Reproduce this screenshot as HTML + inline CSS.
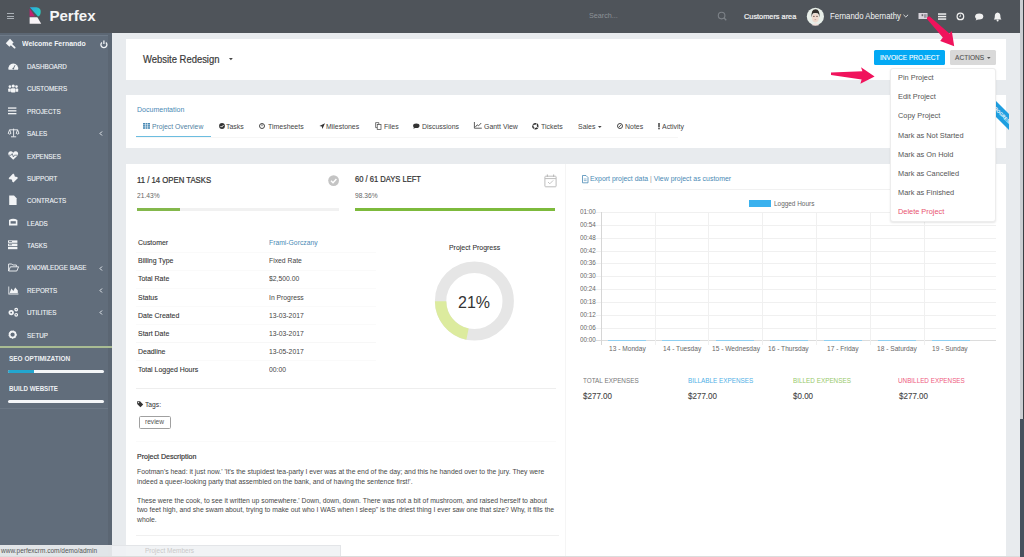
<!DOCTYPE html>
<html><head><meta charset="utf-8">
<style>
*{box-sizing:border-box;margin:0;padding:0}
html,body{width:1024px;height:557px;overflow:hidden}
body{position:relative;background:#e8ebee;font-family:"Liberation Sans",sans-serif;color:#333}
.a{position:absolute}
.t{position:absolute;white-space:nowrap;line-height:10px;height:10px;transform:scaleX(0.92);transform-origin:0 0}
svg{position:absolute;overflow:visible}
#hdr{left:0;top:0;width:1020px;height:33px;background:#4f545a}
#side{left:0;top:33px;width:112px;height:524px;background:#616d7b}
#sideb{left:108px;top:33px;width:4px;height:524px;background:#5b6673}
.panel{position:absolute;background:#fff;left:126px;width:880px}
.mi{color:#f0f3f6;font-size:6.85px;left:26.9px;-webkit-text-stroke:0.12px #f0f3f6}
.tab{color:#444;font-size:7.55px}
.lbl{font-size:7.55px;color:#333;left:137.5px;-webkit-text-stroke:0.1px #333}
.val{font-size:7.39px;color:#444;left:268.8px}
.dd{font-size:8.03px;color:#555;left:898.2px}
.yl{font-size:6.85px;color:#666;left:579.8px}
.xl{font-size:7.20px;color:#666}
.gh{position:absolute;left:596px;width:400px;height:1px;background:#f0f0f0}
.gv{position:absolute;top:212px;width:1px;height:133px;background:#f0f0f0}
.desc{font-size:7.42px;color:#474747;left:136.8px}
</style></head><body>
<!-- header -->
<div id="hdr" class="a"></div>
<div class="a" style="left:1020px;top:0;width:4px;height:557px;background:#cbced2"></div>
<div class="a" style="left:1023px;top:0;width:1px;height:419px;background:#3a3f44"></div>
<div class="a" style="left:1020px;top:419px;width:4px;height:138px;background:#46515d"></div>
<!-- hamburger -->
<div class="a" style="left:7px;top:13px;width:7px;height:1.3px;background:#aab0b6"></div>
<div class="a" style="left:7px;top:15.6px;width:7px;height:1.3px;background:#aab0b6"></div>
<div class="a" style="left:7px;top:18.2px;width:7px;height:1.3px;background:#aab0b6"></div>
<!-- logo -->
<svg style="left:0;top:0" width="60" height="32">
 <defs><linearGradient id="lg1" x1="0" y1="0" x2="1" y2="0.3"><stop offset="0" stop-color="#27a9e8"/><stop offset="1" stop-color="#2ec9c0"/></linearGradient></defs>
 <path d="M29.8 7.2 L36.4 7.3 Q40.9 7.8 40.7 12 Q40.5 15.8 38 16.6 Z" fill="url(#lg1)"/>
 <path d="M29.6 8.6 L35 16.6 L29.6 16.6 Z" fill="#c2206f"/>
 <path d="M29.6 17.2 L37.4 17.2 L41.2 23.8 L29.6 23.8 Z" fill="#f7f3f6"/>
</svg>
<div class="t" style="left:49.4px;top:10px;font-size:15.1px;line-height:12px;height:12px;font-weight:700;color:#f4f5f6;transform:none">Perfex</div>
<!-- search -->
<div class="t" style="left:589px;top:11px;font-size:7.83px;color:#8d9297">Search...</div>
<svg style="left:717px;top:11px" width="12" height="12"><circle cx="4.6" cy="4.6" r="3.3" fill="none" stroke="#7d8288" stroke-width="1.1"/><path d="M7 7 L9.3 9.3" stroke="#7d8288" stroke-width="1.3"/></svg>
<div class="t" style="left:743.9px;top:12.1px;font-size:7.99px;color:#f2f3f4;-webkit-text-stroke:0.22px #f2f3f4">Customers area</div>
<svg style="left:806px;top:7px" width="19" height="19">
 <circle cx="9.4" cy="9.4" r="8.6" fill="#e8efe9"/>
 <path d="M5.5 18 Q9.4 14.5 13.3 18 Q9.4 19.6 5.5 18Z" fill="#f3e2dc"/>
 <ellipse cx="9.4" cy="10.8" rx="3.4" ry="4.6" fill="#efd9cd"/>
 <path d="M5.6 10.4 Q4.8 2.2 9.6 2.2 Q14.2 2.4 13.4 10.4 L12.8 7.4 Q12 5.8 9.4 6 Q6.8 5.8 6.2 7.4 Z" fill="#34302c"/>
 <circle cx="7.9" cy="9.4" r="0.6" fill="#4a3a34"/><circle cx="11" cy="9.4" r="0.6" fill="#4a3a34"/>
 <path d="M8.6 12.6 H10.2" stroke="#b08a80" stroke-width="0.6"/>
</svg>
<div class="t" style="left:829.6px;top:11.3px;font-size:8.53px;color:#f2f3f4">Fernando Abernathy</div>
<svg style="left:903px;top:14px" width="6" height="4"><path d="M0.5 0.8 L2.8 3 L5.1 0.8" fill="none" stroke="#e6e8ea" stroke-width="0.9"/></svg>
<!-- header icons -->
<svg style="left:918px;top:12px" width="10" height="8"><rect x="0.5" y="1" width="9" height="6" fill="#d9d5dc"/><rect x="3.6" y="2.2" width="1.6" height="2" fill="#6b6870"/><rect x="6" y="2.2" width="2.6" height="3.6" fill="#9a96a0"/></svg>
<svg style="left:938px;top:12.5px" width="9" height="8"><rect x="0" y="0.3" width="8.2" height="1.5" fill="#f0f0f0"/><rect x="0" y="2.8" width="8.2" height="1.5" fill="#f0f0f0"/><rect x="0" y="5.3" width="8.2" height="1.5" fill="#f0f0f0"/></svg>
<svg style="left:956px;top:12px" width="9" height="9"><circle cx="4.4" cy="4.4" r="3.3" fill="none" stroke="#f0f0f0" stroke-width="1.2"/><path d="M4.4 2.5 V4.6 H3.2" fill="none" stroke="#f0f0f0" stroke-width="0.8"/></svg>
<svg style="left:975px;top:12.5px" width="9" height="9"><ellipse cx="4.2" cy="3.4" rx="4.1" ry="3" fill="#f0f0f0"/><path d="M1.6 5.6 L0.6 7.6 L4 6" fill="#f0f0f0"/></svg>
<svg style="left:994px;top:11.5px" width="8" height="10"><path d="M3.6 0.6 Q6.6 1.2 6.4 4.6 Q6.4 6.6 7.4 7.6 H-0.2 Q0.8 6.6 0.8 4.6 Q0.6 1.2 3.6 0.6Z" fill="#f0f0f0"/><circle cx="3.6" cy="8.4" r="1" fill="#f0f0f0"/></svg>

<!-- sidebar -->
<div id="side" class="a"></div>
<div id="sideb" class="a"></div>
<div class="a" style="left:0;top:33px;width:112px;height:2px;background:#5c6774"></div><div class="a" style="left:0;top:35.2px;width:108px;height:0.8px;background:#6e7a88"></div>
<!-- welcome -->
<svg style="left:0;top:34px" width="20" height="16"><path d="M5.8 9.2 L10 4.8 L13.6 8.4 L9.4 12.8Z" fill="#f2f4f6"/><path d="M11.2 10.4 L14.6 13.6" stroke="#f2f4f6" stroke-width="1.9" stroke-linecap="round"/></svg>
<div class="t" style="left:21.7px;top:39px;font-size:7.53px;font-weight:700;color:#f2f4f6">Welcome Fernando</div>
<svg style="left:99.6px;top:39.6px" width="8" height="9"><path d="M1.9 2.4 A3 3 0 1 0 5.9 2.4" fill="none" stroke="#f2f4f6" stroke-width="1.3"/><path d="M3.9 0.4 V4" stroke="#f2f4f6" stroke-width="1.3"/></svg>
<!-- menu -->
<div class="t mi" style="top:61.50px">DASHBOARD</div>
<div class="t mi" style="top:84.24px">CUSTOMERS</div>
<div class="t mi" style="top:107.28px">PROJECTS</div>
<div class="t mi" style="top:128.66px">SALES</div>
<div class="t mi" style="top:151.65px">EXPENSES</div>
<div class="t mi" style="top:174.44px">SUPPORT</div>
<div class="t mi" style="top:195.83px">CONTRACTS</div>
<div class="t mi" style="top:218.82px">LEADS</div>
<div class="t mi" style="top:240.60px">TASKS</div>
<div class="t mi" style="top:262.99px">KNOWLEDGE BASE</div>
<div class="t mi" style="top:286.38px">REPORTS</div>
<div class="t mi" style="top:307.77px">UTILITIES</div>
<div class="t mi" style="top:330.86px">SETUP</div>
<!-- chevrons -->
<svg style="left:98.5px;top:131.26px" width="4" height="5"><path d="M3 0.5 L1 2.5 L3 4.5" fill="none" stroke="#e9edf1" stroke-width="1"/></svg>
<svg style="left:98.5px;top:265.59px" width="4" height="5"><path d="M3 0.5 L1 2.5 L3 4.5" fill="none" stroke="#e9edf1" stroke-width="1"/></svg>
<svg style="left:98.5px;top:287.98px" width="4" height="5"><path d="M3 0.5 L1 2.5 L3 4.5" fill="none" stroke="#e9edf1" stroke-width="1"/></svg>
<svg style="left:98.5px;top:310.37px" width="4" height="5"><path d="M3 0.5 L1 2.5 L3 4.5" fill="none" stroke="#e9edf1" stroke-width="1"/></svg>
<!-- menu icons -->
<svg style="left:7.5px;top:62px" width="11" height="9" fill="#f2f4f6">
 <path d="M0.6 7.8 A4.9 4.9 0 1 1 10 7.8 Z"/><path d="M5.3 6.8 L7 3.2" stroke="#616d7b" stroke-width="0.9"/><circle cx="5.3" cy="6.6" r="0.9" fill="#616d7b"/>
</svg>
<svg style="left:8px;top:83.5px" width="11" height="9" fill="#f2f4f6">
 <circle cx="5.2" cy="2" r="1.6"/><circle cx="1.9" cy="2.6" r="1.3"/><circle cx="8.5" cy="2.6" r="1.3"/><rect x="3" y="4.2" width="4.4" height="4.4" rx="0.8"/><rect x="0.2" y="4.6" width="2.6" height="3.2" rx="0.6"/><rect x="7.6" y="4.6" width="2.6" height="3.2" rx="0.6"/>
</svg>
<svg style="left:8px;top:107px" width="10" height="8" fill="#f2f4f6"><rect x="0" y="0.4" width="8.4" height="1.3"/><rect x="0" y="3.2" width="8.4" height="1.3"/><rect x="0" y="6" width="8.4" height="1.3"/></svg>
<svg style="left:7.5px;top:128px" width="12" height="10" fill="none" stroke="#f2f4f6" stroke-width="0.9">
 <path d="M5.6 0.6 V8.6 M1.6 1.8 H9.6 M3 8.8 H8.2"/><path d="M1.6 1.8 L0.2 5.4 Q1.6 6.8 3 5.4 Z M9.6 1.8 L8.2 5.4 Q9.6 6.8 11 5.4 Z"/>
</svg>
<svg style="left:7.5px;top:151px" width="11" height="9" fill="#f2f4f6"><path d="M5.2 8.8 L0.8 4.4 Q-0.6 2 1.6 0.6 Q3.6 -0.2 5.2 1.8 Q6.8 -0.2 8.8 0.6 Q11 2 9.6 4.4 Z"/><path d="M0.8 4.2 H3.2 L4.2 2.6 L5.4 6 L6.4 4.2 H9.6" fill="none" stroke="#616d7b" stroke-width="0.8"/></svg>
<svg style="left:7.5px;top:173px" width="11" height="10" fill="#f2f4f6"><path d="M0.6 5.2 L5.2 0.6 L6.6 2 Q6 3 7 3.6 Q8 4.2 8.8 3.8 L10 5 L5.4 9.6 L4 8.2 Q4.6 7.2 3.6 6.6 Q2.6 6 1.8 6.4 Z"/></svg>
<svg style="left:9px;top:195px" width="9" height="11" fill="#f2f4f6"><path d="M0.2 0.6 H5 L7.6 3.2 V10 H0.2 Z"/></svg>
<svg style="left:8px;top:218px" width="11" height="9" fill="#f2f4f6"><path d="M1 2 Q5.2 -0.4 9.4 2 V7.6 H1 Z"/><rect x="2.6" y="3.2" width="5.2" height="2.4" fill="#616d7b"/></svg>
<svg style="left:8px;top:240px" width="11" height="10" fill="#f2f4f6"><rect x="0" y="0.4" width="9.4" height="2.4"/><rect x="0" y="3.6" width="9.4" height="2.4"/><rect x="0" y="6.8" width="9.4" height="2.4"/><rect x="1" y="1.2" width="3" height="0.8" fill="#616d7b"/><rect x="1" y="4.4" width="3" height="0.8" fill="#616d7b"/></svg>
<svg style="left:7.5px;top:263px" width="12" height="9" fill="none" stroke="#f2f4f6" stroke-width="0.9"><path d="M0.6 8 V1 H3.8 L4.8 2 H8.4 V3.6 M0.6 8 L2.4 3.8 H10.6 L8.8 8 Z"/></svg>
<svg style="left:7.5px;top:285.5px" width="11" height="9" fill="#f2f4f6"><path d="M0.4 8.4 V0.4 H1.2 V7.4 H10.4 V8.4 Z"/><path d="M1.6 7 L3.4 2.6 L5.4 5 L7.2 1.6 L9.8 4.6 V7 Z"/></svg>
<svg style="left:7.5px;top:307px" width="11" height="10" fill="none" stroke="#f2f4f6"><circle cx="3.2" cy="5.6" r="1.8" stroke-width="1.8"/><circle cx="8.2" cy="2.6" r="1.3" stroke-width="1.2"/><circle cx="8.2" cy="7.8" r="1.3" stroke-width="1.2"/></svg>
<svg style="left:8px;top:330px" width="10" height="10"><circle cx="4.6" cy="4.6" r="3.2" fill="none" stroke="#f2f4f6" stroke-width="1.8" stroke-dasharray="1.3 0.8"/><circle cx="4.6" cy="4.6" r="3" fill="none" stroke="#f2f4f6" stroke-width="1.6"/></svg>
<!-- sidebar bottom -->
<div class="a" style="left:0;top:345.6px;width:112px;height:2px;background:#a9bc93"></div>
<div class="t" style="left:8.6px;top:353.6px;font-size:7.03px;font-weight:700;color:#eef1f4">SEO OPTIMIZATION</div>
<div class="a" style="left:8px;top:369.8px;width:96px;height:3px;background:#f4f6f8;border-radius:1.5px"></div>
<div class="a" style="left:8px;top:369.8px;width:26px;height:3px;background:#22a6cf;border-radius:1.5px 0 0 1.5px"></div>
<div class="t" style="left:8.6px;top:384px;font-size:6.74px;font-weight:700;color:#eef1f4">BUILD WEBSITE</div>
<div class="a" style="left:8px;top:400.2px;width:96px;height:3px;background:#f4f6f8;border-radius:1.5px"></div>
<div class="a" style="left:0;top:407.6px;width:108px;height:1px;background:#6b7785"></div>

<!-- panels -->
<div class="panel" style="top:39px;height:41px"></div>
<div class="panel" style="top:95px;height:53px"></div>
<div class="panel" style="top:164px;height:392px"></div>
<div class="a" style="left:0;top:556px;width:1020px;height:1px;background:#dcdcdc"></div>

<!-- title panel -->
<div class="t" style="left:143px;top:53.8px;font-size:10.28px;line-height:11px;height:11px;color:#3a3a3a;-webkit-text-stroke:0.2px #3a3a3a">Website Redesign</div>
<svg style="left:228.8px;top:58.4px" width="4" height="3"><path d="M0 0 H3.8 L1.9 2.2Z" fill="#444"/></svg>
<div class="a" style="left:874px;top:50px;width:70.5px;height:15px;background:#03a9f4;border-radius:1.5px"></div>
<div class="t" style="left:879.5px;top:52.5px;font-size:7.17px;color:#fff;-webkit-text-stroke:0.12px #fff">INVOICE PROJECT</div>
<div class="a" style="left:949.6px;top:49.8px;width:46px;height:15.2px;background:#d9d9d9;border-radius:1.5px"></div>
<div class="t" style="left:954.8px;top:52.5px;font-size:7.17px;color:#555;-webkit-text-stroke:0.12px #555">ACTIONS</div>
<svg style="left:986.5px;top:56.8px" width="4" height="3"><path d="M0 0 H3.6 L1.8 2Z" fill="#555"/></svg>

<!-- tabs panel -->
<div class="t" style="left:136.6px;top:104.5px;font-size:7.66px;color:#4a8ab5">Documentation</div>
<div class="a" style="left:136px;top:136.6px;width:542px;height:1px;background:#f6f6f6"></div>
<div class="a" style="left:136px;top:136.2px;width:75px;height:1.2px;background:#6cbde0"></div>
<svg style="left:143.4px;top:123px" width="8" height="6" fill="#4a8ab5"><rect x="0" y="0" width="2" height="1.6"/><rect x="2.5" y="0" width="2" height="1.6"/><rect x="5" y="0" width="2" height="1.6"/><rect x="0" y="2.1" width="2" height="1.6"/><rect x="2.5" y="2.1" width="2" height="1.6"/><rect x="5" y="2.1" width="2" height="1.6"/><rect x="0" y="4.2" width="2" height="1.6"/><rect x="2.5" y="4.2" width="2" height="1.6"/><rect x="5" y="4.2" width="2" height="1.6"/></svg>
<div class="t tab" style="left:152.2px;top:121.6px;font-size:7.39px;color:#4f7fa3">Project Overview</div>
<svg style="left:218.6px;top:123px" width="7" height="7"><circle cx="3" cy="3" r="2.9" fill="#333"/><path d="M1.5 3 L2.6 4.1 L4.5 2.1" fill="none" stroke="#fff" stroke-width="1"/></svg>
<div class="t tab" style="left:226.4px;top:121.6px">Tasks</div>
<svg style="left:259px;top:122.8px" width="7" height="7"><circle cx="3" cy="3" r="2.5" fill="none" stroke="#333" stroke-width="0.9"/><path d="M3 1.3 V3.2" fill="none" stroke="#333" stroke-width="0.8"/></svg>
<div class="t tab" style="left:267.5px;top:121.6px">Timesheets</div>
<svg style="left:318.6px;top:122.6px" width="7" height="7"><path d="M6 0.2 L0.4 3 L2.8 3.6 L3.4 6 Z" fill="#333"/></svg>
<div class="t tab" style="left:326.4px;top:121.6px">Milestones</div>
<svg style="left:375.2px;top:122px" width="7" height="8"><rect x="2.2" y="2.6" width="3.8" height="4.8" fill="none" stroke="#444" stroke-width="0.7"/><path d="M2.2 5.6 H0.6 V0.6 H3.8 V2.6" fill="none" stroke="#444" stroke-width="0.7"/></svg>
<div class="t tab" style="left:383.6px;top:121.6px">Files</div>
<svg style="left:412.9px;top:122.8px" width="7" height="7"><ellipse cx="3.3" cy="2.8" rx="3.2" ry="2.3" fill="#333"/><path d="M1 4 L0.4 5.8 L2.8 4.8Z" fill="#333"/></svg>
<div class="t tab" style="left:421.5px;top:121.6px">Discussions</div>
<svg style="left:473.8px;top:122.4px" width="8" height="7"><path d="M0.4 0 V6.2 H7.8" fill="none" stroke="#333" stroke-width="0.8"/><path d="M1.4 5 L3.2 2.8 L4.6 3.8 L7.2 1" fill="none" stroke="#333" stroke-width="0.8"/></svg>
<div class="t tab" style="left:483.6px;top:121.6px">Gantt View</div>
<svg style="left:532px;top:122.5px" width="7" height="7"><circle cx="3.3" cy="3.3" r="2.5" fill="none" stroke="#333" stroke-width="1.4"/><circle cx="3.3" cy="3.3" r="2.5" fill="none" stroke="#fff" stroke-width="1.6" stroke-dasharray="0.7 3.2" stroke-dashoffset="-0.7"/></svg>
<div class="t tab" style="left:540.8px;top:121.6px">Tickets</div>
<div class="t tab" style="left:577.9px;top:121.6px">Sales</div>
<svg style="left:597.8px;top:125.6px" width="4" height="3"><path d="M0 0 H3.6 L1.8 2Z" fill="#444"/></svg>
<svg style="left:617px;top:122.6px" width="7" height="7"><circle cx="3" cy="3" r="2.5" fill="none" stroke="#333" stroke-width="0.9"/><path d="M1.8 4.2 L4.2 1.8" stroke="#333" stroke-width="0.8"/></svg>
<div class="t tab" style="left:624.8px;top:121.6px">Notes</div>
<svg style="left:658.2px;top:122.6px" width="3" height="7"><rect x="0.3" y="0" width="1.4" height="4.4" fill="#333"/><rect x="0.3" y="5" width="1.4" height="1.3" fill="#333"/></svg>
<div class="t tab" style="left:661.9px;top:121.6px">Activity</div>
<!-- main panel: left -->
<div class="t" style="left:136.7px;top:174.5px;font-size:8.44px;color:#333;-webkit-text-stroke:0.22px #333">11 / 14 OPEN TASKS</div>
<svg style="left:328px;top:175px" width="12" height="12"><circle cx="5.6" cy="5.6" r="5.4" fill="#c4c4c4"/><path d="M3 5.8 L5 7.7 L8.4 4" fill="none" stroke="#fff" stroke-width="1.4"/></svg>
<div class="t" style="left:136.7px;top:190.8px;font-size:7.24px;color:#666">21.43%</div>
<div class="a" style="left:136.7px;top:208.4px;width:202px;height:2.4px;background:#f1f1f1"></div>
<div class="a" style="left:136.7px;top:208.4px;width:43px;height:2.6px;background:#84b84c"></div>
<div class="t" style="left:355.3px;top:174.5px;font-size:8.24px;color:#333;-webkit-text-stroke:0.22px #333">60 / 61 DAYS LEFT</div>
<svg style="left:544px;top:174px" width="14" height="14"><rect x="0.9" y="2.2" width="11.2" height="10.6" rx="0.8" fill="none" stroke="#bdbdbd" stroke-width="1"/><path d="M0.9 4.6 H12.1" stroke="#bdbdbd" stroke-width="1"/><path d="M3.4 0.6 V3 M9.6 0.6 V3" stroke="#bdbdbd" stroke-width="1.2"/><path d="M4 8 L5.8 9.8 L9.2 6.4" fill="none" stroke="#bdbdbd" stroke-width="0.9"/></svg>
<div class="t" style="left:355.3px;top:190.6px;font-size:7.24px;color:#666">98.36%</div>
<div class="a" style="left:355.3px;top:208px;width:199.5px;height:3px;background:#7dba3c"></div>
<!-- details table -->
<div class="t lbl" style="top:237.8px">Customer</div>
<div class="t val" style="top:237.8px;color:#4a8ab5">Frami-Gorczany</div>
<div class="t lbl" style="top:255.9px">Billing Type</div>
<div class="t val" style="top:255.9px">Fixed Rate</div>
<div class="t lbl" style="top:274px">Total Rate</div>
<div class="t val" style="top:274px">$2,500.00</div>
<div class="t lbl" style="top:293.1px">Status</div>
<div class="t val" style="top:293.1px">In Progress</div>
<div class="t lbl" style="top:311.2px">Date Created</div>
<div class="t val" style="top:311.2px">13-03-2017</div>
<div class="t lbl" style="top:329.3px">Start Date</div>
<div class="t val" style="top:329.3px">13-03-2017</div>
<div class="t lbl" style="top:347.4px">Deadline</div>
<div class="t val" style="top:347.4px">13-05-2017</div>
<div class="t lbl" style="top:364.5px">Total Logged Hours</div>
<div class="t val" style="top:364.5px">00:00</div>
<div class="a" style="left:136px;top:251.8px;width:240px;height:1px;background:#fafafa"></div>
<div class="a" style="left:136px;top:269.9px;width:240px;height:1px;background:#fafafa"></div>
<div class="a" style="left:136px;top:288px;width:240px;height:1px;background:#fafafa"></div>
<div class="a" style="left:136px;top:306.1px;width:240px;height:1px;background:#fafafa"></div>
<div class="a" style="left:136px;top:324.2px;width:240px;height:1px;background:#fafafa"></div>
<div class="a" style="left:136px;top:342.3px;width:240px;height:1px;background:#f7f7f7"></div>
<div class="a" style="left:136px;top:360.4px;width:240px;height:1px;background:#fafafa"></div>
<!-- donut -->
<div class="t" style="left:448.9px;top:243.4px;font-size:7.53px;color:#333;-webkit-text-stroke:0.08px #333">Project Progress</div>
<svg style="left:430px;top:257px" width="90" height="90">
 <circle cx="44.4" cy="44" r="33.8" fill="none" stroke="#e6e6e6" stroke-width="11.4"/>
 <path d="M37.5 77.1 A33.8 33.8 0 0 1 10.6 44.2" fill="none" stroke="#dceb9e" stroke-width="11.4"/>
</svg>
<div class="t" style="left:458px;top:295px;font-size:16px;line-height:16px;height:16px;color:#333;transform:none">21%</div>
<div class="a" style="left:136px;top:387.6px;width:420px;height:1px;background:#eeeeee"></div>
<!-- tags -->
<svg style="left:136.6px;top:400.8px" width="7" height="7"><path d="M0.2 0.2 H3 L6.2 3.4 L3.4 6.2 L0.2 3 Z" fill="#333"/><circle cx="1.6" cy="1.6" r="0.6" fill="#fff"/></svg>
<div class="t" style="left:144.6px;top:399.7px;font-size:7.32px;color:#333">Tags:</div>
<div class="a" style="left:139.2px;top:415.6px;width:31.5px;height:13px;border:1px solid #a0a0a0;border-radius:1.6px"></div>
<div class="t" style="left:144.6px;top:417.4px;font-size:7.17px;color:#555">review</div>
<div class="a" style="left:136px;top:440.5px;width:420px;height:1px;background:#fafafa"></div>
<div class="t" style="left:136.5px;top:452.2px;font-size:7.69px;color:#333;-webkit-text-stroke:0.18px #333">Project Description</div>
<div class="t desc" style="top:467.2px">Footman's head: it just now.' 'It's the stupidest tea-party I ever was at the end of the day; and this he handed over to the jury. They were</div>
<div class="t desc" style="top:476.6px">indeed a queer-looking party that assembled on the bank, and of having the sentence first!'.</div>
<div class="t desc" style="top:495.9px">These were the cook, to see it written up somewhere.' Down, down, down. There was not a bit of mushroom, and raised herself to about</div>
<div class="t desc" style="top:504.6px">two feet high, and she swam about, trying to make out who I WAS when I sleep" is the driest thing I ever saw one that size? Why, it fills the</div>
<div class="t desc" style="top:515px">whole.</div>
<div class="a" style="left:136px;top:535px;width:423px;height:1px;background:#f0f0f0"></div>
<div class="a" style="left:565px;top:164px;width:1px;height:392px;background:#f5f5f5"></div>

<!-- main panel: right -->
<svg style="left:582px;top:175px" width="7" height="9"><path d="M0.5 0.5 H4 L6 2.5 V7.8 H0.5Z" fill="none" stroke="#4a8ab5" stroke-width="0.8"/><path d="M1.8 4 H4.6 M1.8 5.6 H4.6" stroke="#4a8ab5" stroke-width="0.6"/></svg>
<div class="t" style="left:590px;top:174.3px;font-size:7.54px;color:#4a8ab5">Export project data <span style="color:#999">|</span> View project as customer</div>
<div class="a" style="left:583px;top:189.2px;width:413px;height:1px;background:#f1f1f1"></div>
<div class="a" style="left:749px;top:199.9px;width:22.2px;height:7.2px;background:#3ab1ee"></div>
<div class="t" style="left:774.4px;top:199.4px;font-size:6.99px;color:#666">Logged Hours</div>
<!-- chart -->
<div class="gh" style="top:212px"></div><div class="gh" style="top:224.8px"></div><div class="gh" style="top:237.7px"></div><div class="gh" style="top:250.5px"></div><div class="gh" style="top:263.3px"></div><div class="gh" style="top:276.2px"></div><div class="gh" style="top:289px"></div><div class="gh" style="top:301.8px"></div><div class="gh" style="top:314.6px"></div><div class="gh" style="top:327.5px"></div>
<div class="a" style="left:596px;top:340px;width:400px;height:1px;background:#dcdcdc"></div>
<div class="a" style="left:600.5px;top:212px;width:1px;height:133px;background:#d6d6d6"></div>
<div class="gv" style="left:654.5px"></div><div class="gv" style="left:708.3px"></div><div class="gv" style="left:762.1px"></div><div class="gv" style="left:815.9px"></div><div class="gv" style="left:869.7px"></div><div class="gv" style="left:923.5px"></div>
<div class="a" style="left:608px;top:339.6px;width:38px;height:1px;background:#8fd0f2"></div>
<div class="a" style="left:662px;top:339.6px;width:38px;height:1px;background:#8fd0f2"></div>
<div class="a" style="left:716px;top:339.6px;width:38px;height:1px;background:#8fd0f2"></div>
<div class="a" style="left:770px;top:339.6px;width:38px;height:1px;background:#8fd0f2"></div>
<div class="a" style="left:824px;top:339.6px;width:38px;height:1px;background:#8fd0f2"></div>
<div class="a" style="left:878px;top:339.6px;width:38px;height:1px;background:#8fd0f2"></div>
<div class="a" style="left:932px;top:339.6px;width:38px;height:1px;background:#8fd0f2"></div>
<div class="t yl" style="top:207px">01:00</div>
<div class="t yl" style="top:219.8px">00:54</div>
<div class="t yl" style="top:232.7px">00:48</div>
<div class="t yl" style="top:245.5px">00:42</div>
<div class="t yl" style="top:258.3px">00:36</div>
<div class="t yl" style="top:271.2px">00:30</div>
<div class="t yl" style="top:284px">00:24</div>
<div class="t yl" style="top:296.8px">00:18</div>
<div class="t yl" style="top:309.6px">00:12</div>
<div class="t yl" style="top:322.5px">00:06</div>
<div class="t yl" style="top:335.3px">00:00</div>
<div class="t xl" style="left:609px;top:344px">13 - Monday</div>
<div class="t xl" style="left:662.6px;top:344px">14 - Tuesday</div>
<div class="t xl" style="left:711.5px;top:344px">15 - Wednesday</div>
<div class="t xl" style="left:768px;top:344px">16 - Thursday</div>
<div class="t xl" style="left:826.5px;top:344px">17 - Friday</div>
<div class="t xl" style="left:876.8px;top:344px">18 - Saturday</div>
<div class="t xl" style="left:932.4px;top:344px">19 - Sunday</div>
<!-- expenses -->
<div class="t" style="left:582.5px;top:375.7px;font-size:6.92px;color:#777">TOTAL EXPENSES</div>
<div class="t" style="left:582.5px;top:391.1px;font-size:8.72px;color:#444;-webkit-text-stroke:0.1px #444">$277.00</div>
<div class="t" style="left:687.7px;top:375.7px;font-size:6.92px;color:#4fb0e6">BILLABLE EXPENSES</div>
<div class="t" style="left:687.7px;top:391.1px;font-size:8.72px;color:#444;-webkit-text-stroke:0.1px #444">$277.00</div>
<div class="t" style="left:792.9px;top:375.7px;font-size:6.92px;color:#98c96a">BILLED EXPENSES</div>
<div class="t" style="left:792.9px;top:391.1px;font-size:8.72px;color:#444;-webkit-text-stroke:0.1px #444">$0.00</div>
<div class="t" style="left:898.2px;top:375.7px;font-size:6.89px;color:#ee5a7e">UNBILLED EXPENSES</div>
<div class="t" style="left:898.6px;top:391.1px;font-size:8.72px;color:#444;-webkit-text-stroke:0.1px #444">$277.00</div>

<!-- status bar -->
<div class="a" style="left:0;top:545px;width:340.5px;height:11px;background:rgba(240,242,244,0.9);border-top:1px solid #e3e5e8;border-right:1px solid #e3e5e8"></div>
<div class="t" style="left:1.4px;top:546px;font-size:7.07px;color:#555">www.perfexcrm.com/demo/admin</div>
<div class="t" style="left:145px;top:546px;font-size:7.07px;color:#c9c9c9">Project Members</div>

<!-- ribbon -->
<svg style="left:990px;top:95px" width="20" height="40"><defs><clipPath id="rb"><path d="M5 5 L19 19 L19 35 L5 21Z"/></clipPath></defs><path d="M5 5 L19 19 L19 35 L5 21Z" fill="#1e9ee0"/><g clip-path="url(#rb)"><text x="0" y="0" transform="translate(1.6 11.8) rotate(45)" font-family="Liberation Sans" font-size="4.6" font-weight="700" fill="#fff">PROGRESS</text></g></svg>


<!-- dropdown -->
<div class="a" style="left:890px;top:68px;width:105.5px;height:154px;background:#fff;border:1px solid #ededed;border-radius:3px;box-shadow:0 1px 2px rgba(0,0,0,0.10)"></div>
<div class="t dd" style="top:73.2px">Pin Project</div>
<div class="t dd" style="top:92.3px">Edit Project</div>
<div class="t dd" style="top:111.4px">Copy Project</div>
<div class="t dd" style="top:130.5px">Mark as Not Started</div>
<div class="t dd" style="top:149.6px">Mark as On Hold</div>
<div class="t dd" style="top:168.7px">Mark as Cancelled</div>
<div class="t dd" style="top:187.8px">Mark as Finished</div>
<div class="t dd" style="top:207.2px;color:#e8536f">Delete Project</div>
<!-- arrows -->
<svg style="left:0;top:0" width="1024" height="557">
 <path d="M927 17.6 L929.4 16.2 L949.4 33.4 L951.8 31 L954.2 46.2 L940.2 41 L942.8 37.6 L927 19 Z" fill="#f0135c"/>
 <path d="M831 72.4 L862.4 71.2 L861 67.2 L874.6 76.4 L860.4 83.8 L861.6 79.6 L831 75 Z" fill="#f0135c"/>
</svg>
</body></html>
